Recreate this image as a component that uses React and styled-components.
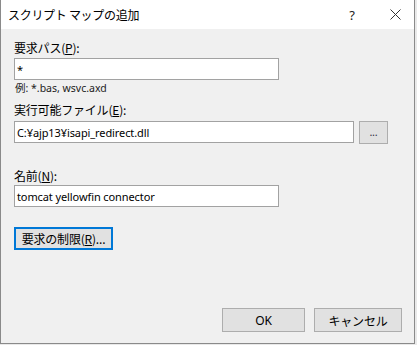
import React from 'react';
import styled, { createGlobalStyle } from 'styled-components';

const GlobalStyle = createGlobalStyle`
  html, body {
    margin: 0;
    padding: 0;
    background: #e9e9e9;
  }
  body {
    font-family: "Noto Sans CJK JP", "Noto Sans", sans-serif;
    font-size: 12px;
    color: #000;
  }
`;

const Window = styled.div`
  width: 415px;
  height: 344px;
  box-sizing: border-box;
  display: flex;
  flex-direction: column;
  border: 1px solid #8a8a8a;
  border-top: none;
  background: #f0f0f0;
`;

const TitleBar = styled.div`
  height: 29px;
  flex: none;
  background: #fff;
  display: flex;
  align-items: center;
  padding-left: 7px;
  font-size: 12px;
`;

const Title = styled.span`
  flex: 1;
  letter-spacing: -0.3px;
`;

const TitleButton = styled.span`
  width: ${p => p.w}px;
  display: flex;
  justify-content: center;
  align-items: center;
  color: #222;
  font-family: "Noto Sans", sans-serif;
  font-size: 13px;
`;

const Body = styled.div`
  flex: 1;
  display: flex;
  flex-direction: column;
  padding: 0 12px 11px 13px;
`;

const Label = styled.div`
  line-height: 16px;
  margin-top: ${p => p.mt}px;
  letter-spacing: -0.2px;
`;

const Hint = styled.div`
  line-height: 16px;
  font-family: "Noto Sans", "Noto Sans CJK JP", sans-serif;
  font-size: 10.5px;
  color: #222;
  padding-left: 1px;
`;

const Row = styled.div`
  display: flex;
  align-items: flex-start;
  gap: 5px;
  margin-top: ${p => p.mt}px;
`;

const Input = styled.div`
  width: ${p => p.w}px;
  height: 22px;
  box-sizing: border-box;
  border: 1px solid #a2a2a2;
  background: #fff;
  padding: 0 2px;
  display: flex;
  align-items: center;
  font-family: "Noto Sans", "Noto Sans CJK JP", sans-serif;
  font-size: 11px;
  line-height: 1;
  letter-spacing: -0.1px;
  white-space: nowrap;
  margin-top: ${p => p.mt || 0}px;
`;

const Button = styled.div`
  width: ${p => p.w}px;
  height: ${p => p.h || 24}px;
  box-sizing: border-box;
  border: 1px solid ${p => (p.focused ? '#0078d7' : '#adadad')};
  box-shadow: ${p => (p.focused ? 'inset 0 0 0 1px #0078d7' : 'none')};
  background: #e1e1e1;
  display: flex;
  align-items: center;
  justify-content: center;
  margin-top: ${p => p.mt || 0}px;
  letter-spacing: -0.2px;
`;

const Dots = styled.span`
  font-family: "Noto Sans", sans-serif;
  font-size: 11px;
  color: #334;
  margin-top: -2px;
`;

const Footer = styled.div`
  margin-top: auto;
  display: flex;
  justify-content: flex-end;
  gap: 9px;
`;

const Latin = styled.span`
  font-family: "Noto Sans", sans-serif;
  font-size: 12px;
`;

export default function App() {
  return (
    <>
      <GlobalStyle />
      <Window>
        <TitleBar>
          <Title>スクリプト マップの追加</Title>
          <TitleButton w={48}>?</TitleButton>
          <TitleButton w={38}>
            <svg width="11" height="11" viewBox="0 0 11 11">
              <path d="M0.5 0.5 L10.5 10.5 M10.5 0.5 L0.5 10.5" stroke="#333" strokeWidth="1" fill="none" />
            </svg>
          </TitleButton>
        </TitleBar>
        <Body>
          <Label mt={11}>
            要求パス(<u>P</u>):
          </Label>
          <Input w={265} mt={2}>*</Input>
          <Hint>例: *.bas, wsvc.axd</Hint>
          <Label mt={6}>
            実行可能ファイル(<u>E</u>):
          </Label>
          <Row mt={3}>
            <Input w={340}>C:¥ajp13¥isapi_redirect.dll</Input>
            <Button w={29} h={23}>
              <Dots>...</Dots>
            </Button>
          </Row>
          <Label mt={24}>
            名前(<u>N</u>):
          </Label>
          <Input w={265} mt={1}>tomcat yellowfin connector</Input>
          <Button w={99} h={23} mt={20} focused>
            要求の制限(<u>R</u>)...
          </Button>
          <Footer>
            <Button w={83}>
              <Latin>OK</Latin>
            </Button>
            <Button w={88}>キャンセル</Button>
          </Footer>
        </Body>
      </Window>
    </>
  );
}
